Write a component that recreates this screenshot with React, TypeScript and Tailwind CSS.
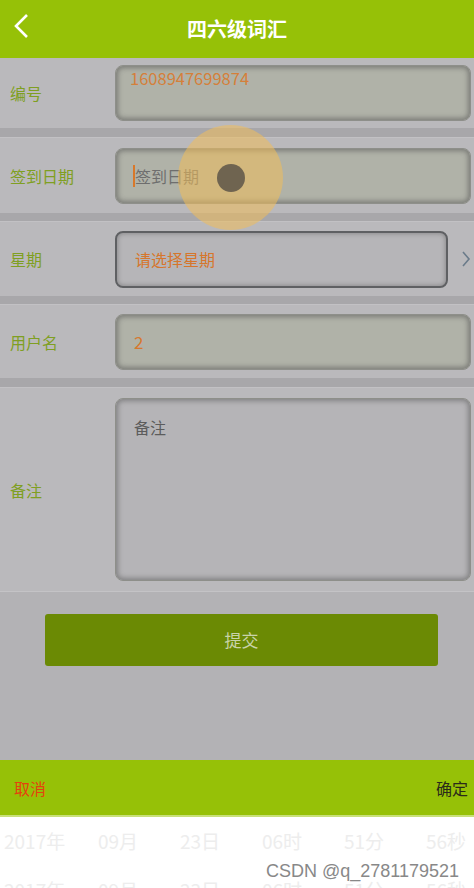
import React from "react";

const font = { fontFamily: '"Noto Sans CJK SC", "Noto Sans", sans-serif' };

function Row({ label, children, h, right }: { label: string; children: React.ReactNode; h: string; right?: React.ReactNode }) {
  return (
    <div className={`flex items-center bg-[#bab9bc] ${h}`}>
      <div className="w-[115px] pl-[10px] text-[16px] text-[#7f9f22]">{label}</div>
      {children}
      {right}
    </div>
  );
}

const boxCls =
  "rounded-[8px] border border-[#8e8f8a] bg-[#b0b2a8] shadow-[inset_0_0_5px_2px_rgba(80,80,80,0.55)]";

function PickerRow({ cls }: { cls: string }) {
  return (
    <div className={`flex pl-[4px] text-[19px] text-[#ededed] ${cls}`}>
      <span className="w-[94px]">2017年</span>
      <span className="w-[82px]">09月</span>
      <span className="w-[82px]">23日</span>
      <span className="w-[82px]">06时</span>
      <span className="w-[82px]">51分</span>
      <span>56秒</span>
    </div>
  );
}

export default function App() {
  return (
    <div className="w-[474px] h-[888px] overflow-hidden bg-[#b3b2b5] flex flex-col relative" style={font}>
      {/* header */}
      <div className="h-[58px] bg-[#96c107] flex items-center relative shrink-0">
        <svg className="absolute left-[12px] top-[12px]" width="18" height="28" viewBox="0 0 18 28">
          <path d="M15 3 L4 14 L15 25" fill="none" stroke="#fff" strokeWidth="2.6" />
        </svg>
        <div className="w-full text-center text-white text-[20px] font-bold">四六级词汇</div>
      </div>

      {/* row 1 */}
      <Row label="编号" h="h-[70px]">
        <div className={`${boxCls} w-[356px] h-[56px] relative`}>
          <span className="absolute left-[14px] top-[0px] text-[16.5px] text-[#d57f3a]">1608947699874</span>
        </div>
      </Row>
      <div className="h-[10px] bg-[#a8a7aa] border-b border-[#c2c1c4]" />

      {/* row 2 */}
      <Row label="签到日期" h="h-[75px]">
        <div className={`${boxCls} w-[356px] h-[56px] flex items-center pl-[17px]`}>
          <span className="w-[2px] h-[22px] bg-[#d9782a]" />
          <span className="text-[16px] text-[#6e6e6e]">签到日期</span>
        </div>
      </Row>
      <div className="h-[9px] bg-[#a8a7aa] border-b border-[#c2c1c4]" />

      {/* row 3 */}
      <Row
        label="星期"
        h="h-[74px]"
        right={
          <svg className="ml-[13px]" width="10" height="18" viewBox="0 0 10 18">
            <path d="M2 2 L8 9 L2 16" fill="none" stroke="#6b7b8a" strokeWidth="1.6" />
          </svg>
        }
      >
        <div className="w-[333px] h-[57px] rounded-[8px] border-2 border-[#5f6063] bg-[#b6b5b8] shadow-[inset_0_0_4px_1px_rgba(80,80,80,0.4)] flex items-center pl-[18px]">
          <span className="text-[16px] text-[#d6762c]">请选择星期</span>
        </div>
      </Row>
      <div className="h-[9px] bg-[#a8a7aa] border-b border-[#c2c1c4]" />

      {/* row 4 */}
      <Row label="用户名" h="h-[73px]">
        <div className={`${boxCls} w-[356px] h-[56px] flex items-center pl-[18px]`}>
          <span className="text-[17px] text-[#d6782f]">2</span>
        </div>
      </Row>
      <div className="h-[10px] bg-[#a8a7aa] border-b border-[#c2c1c4]" />

      {/* row 5 */}
      <Row label="备注" h="h-[203px]">
        <div className="w-[356px] h-[183px] rounded-[8px] border border-[#8e8f8a] bg-[#b5b4b7] shadow-[inset_0_0_5px_2px_rgba(80,80,80,0.5)] pl-[18px] pt-[16px]">
          <span className="text-[16px] text-[#5c5c5c]">备注</span>
        </div>
      </Row>
      <div className="h-[1px] bg-[#c4c3c6]" />

      {/* submit */}
      <div className="flex pl-[45px] pt-[22px]">
        <div className="w-[393px] h-[52px] rounded-[3px] bg-[#6b8a04] flex items-center justify-center text-[17px] text-[#c9d3a8]">
          提交
        </div>
      </div>
      <div className="flex-1" />

      {/* picker bar */}
      <div className="h-[57px] bg-[#96c107] flex items-center justify-between px-[14px] border-b-2 border-[#c8e07a] shrink-0">
        <span className="text-[16px] text-[#e4420e]">取消</span>
        <span className="text-[16px] text-[#2a2a1a] mr-[-8px]">确定</span>
      </div>
      <div className="h-[71px] bg-white shrink-0 relative overflow-hidden">
        <PickerRow cls="pt-[10px]" />
        <PickerRow cls="pt-[20px]" />
        <div
          className="absolute left-[266px] top-[41px] text-[18px] text-[#888888]"
          style={{ fontFamily: '"Liberation Sans", Arial, sans-serif' }}
        >
          CSDN @q_2781179521
        </div>
      </div>

      {/* touch indicator */}
      <div className="absolute left-[178px] top-[125px] w-[105px] h-[105px] rounded-full bg-[rgba(240,190,90,0.55)] flex items-center justify-center">
        <div className="w-[28px] h-[28px] rounded-full bg-[#6f6450]" />
      </div>
    </div>
  );
}
